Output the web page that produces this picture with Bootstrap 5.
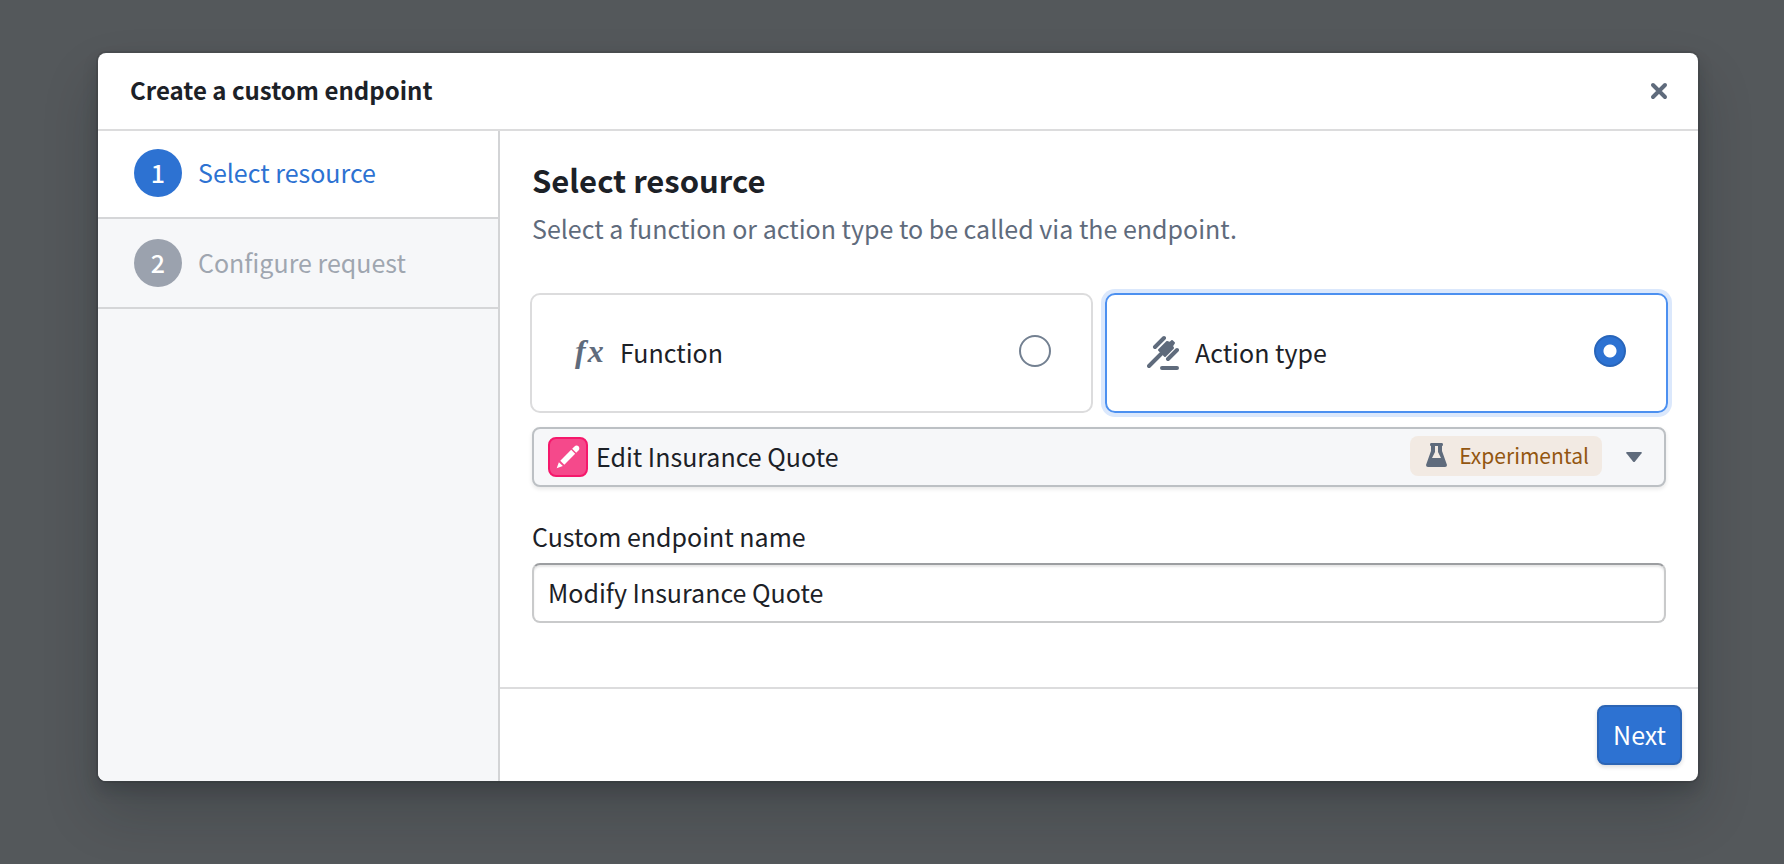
<!DOCTYPE html>
<html lang="en">
<head>
<meta charset="utf-8">
<meta name="viewport" content="width=device-width, initial-scale=1">
<title>Create a custom endpoint</title>
<link href="https://cdn.jsdelivr.net/npm/bootstrap@5.3.0/dist/css/bootstrap.min.css" rel="stylesheet">
<style>
  :root { --ink: #1c2127; --muted: #5f6b7c; --blue: #2d72d2; --line: #dcdcdd; }
  body {
    background: #54585b; color: var(--ink);
    font-family: "Noto Sans CJK SC", "Noto Sans", sans-serif;
    font-size: 25px; line-height: 36px;
  }
  .page-wrap { padding: 53px 86px 82px 98px; }
  .dialog {
    border-radius: 8px; overflow: hidden;
    box-shadow: 0 0 0 2px rgba(17,20,24,.1), 0 8px 16px rgba(17,20,24,.2), 0 30px 56px rgba(17,20,24,.2);
  }
  .dialog-head { padding: 20px 29px 20px 32px; border-bottom: 2px solid var(--line); }
  .dialog-title { font-size: 24px; line-height: 34px; font-weight: 600; }
  .close-btn { width: 20px; height: 20px; color: var(--muted); }
  .steps { flex: 0 0 402px; background: #f6f7f9; border-right: 2px solid #d3d4d6; }
  .step { padding: 20px 36px; gap: 16px; border-bottom: 2px solid #d5d6d8; color: #9fa6b0; text-decoration: none; }
  .step:first-child { padding-top: 18px; }
  .step.current { background: #fff; color: var(--blue); }
  .step-num { width: 48px; height: 48px; background: #9ba2ae; color: #fff; font-weight: 500; }
  .current .step-num { background: var(--blue); }
  .dialog-title, .step-num, .step-text, .choice-text { padding-bottom: 2px; }
  .pane-body { padding: 29px 30px 64px; }
  .pane-title { font-size: 31px; line-height: 40px; font-weight: 600; }
  .inset { margin-left: 2px; margin-right: 2px; }
  .subtitle { color: var(--muted); margin-top: 10px; }
  .choices { gap: 12px; margin-top: 47px; }
  .choice { flex: 1 1 0; height: 120px; padding: 0 40px; border: 2px solid var(--line); border-radius: 10px; cursor: pointer; }
  .choice.picked { border-color: #4c90f0; box-shadow: 0 0 0 4px #dbe8fc; }
  .choice-icon { width: 32px; height: 36px; margin-right: 16px; color: var(--muted); }
  .fx { gap: 2px; padding-left: 3px; font: italic bold 32px/32px "Liberation Serif", serif; }
  .choice input {
    appearance: none; width: 32px; height: 32px; margin: 0 0 4px; border: 2px solid #738091; border-radius: 50%; background: #fff;
  }
  .choice input:checked { border-color: #2865ba; background: radial-gradient(circle, #fff 6px, var(--blue) 7px); }
  .picker { margin-top: 14px; }
  .picker > * { grid-area: 1 / 1; }
  .picker select {
    appearance: none; height: 60px; padding: 0 260px 2px 62px; color: var(--ink);
    border: 2px solid #bcc0c4; border-radius: 8px; background: #f6f7f9; box-shadow: 0 2px 4px rgba(17,20,24,.1);
  }
  .picker-extras { padding: 0 24px 0 16px; pointer-events: none; z-index: 1; }
  .tile { width: 40px; height: 40px; border: 2px solid #f5186b; border-radius: 8px; background: #f5498b; }
  .tag { height: 40px; padding: 0 13px 2px 15px; gap: 10px; border-radius: 8px; background: #f2eae3; color: #935610; font-size: 21px; margin: 0 24px 2px 0; }
  .name-label { margin-top: 31px; margin-bottom: 9px; }
  .name-box {
    height: 60px; padding: 0 14px 2px; color: var(--ink); border: 2px solid #c9cacb; border-top-color: #9c9ea1; border-radius: 8px;
    box-shadow: inset 0 2px 2px rgba(17,20,24,.1);
  }
  .dialog-foot { padding: 16px; border-top: 2px solid var(--line); }
  .next-btn {
    height: 60px; padding: 0 14px 2px; border: 2px solid #2c65b5; border-radius: 8px; background: var(--blue); color: #fff;
    box-shadow: 0 2px 4px rgba(17,20,24,.15);
  }
  @media (max-width: 1100px) {
    .page-wrap { padding: 24px; }
    .dialog-main, .choices { flex-direction: column; }
    .steps, .choice { flex: none; border-right-width: 2px; }
  }
</style>
</head>
<body>
<div class="page-wrap">
  <section class="dialog bg-white" role="dialog" aria-labelledby="dialog-title">
    <header class="dialog-head d-flex align-items-center justify-content-between">
      <h1 class="dialog-title m-0" id="dialog-title">Create a custom endpoint</h1>
      <button type="button" class="close-btn btn border-0 p-0 d-flex" aria-label="Close">
        <svg width="20" height="20" viewBox="0 0 20 20" fill="none" stroke="currentColor" stroke-width="4" stroke-linecap="round"><path d="M4 4l12 12M16 4L4 16"/></svg>
      </button>
    </header>
    <div class="dialog-main d-flex">
      <nav class="steps" aria-label="Steps">
        <a href="#" class="step current d-flex align-items-center" aria-current="step"><span class="step-num rounded-circle d-flex align-items-center justify-content-center">1</span><span class="step-text">Select resource</span></a>
        <a href="#" class="step d-flex align-items-center"><span class="step-num rounded-circle d-flex align-items-center justify-content-center">2</span><span class="step-text">Configure request</span></a>
      </nav>
      <form class="flex-fill d-flex flex-column">
        <div class="pane-body">
          <h2 class="pane-title inset mb-0">Select resource</h2>
          <p class="subtitle inset mb-0">Select a function or action type to be called via the endpoint.</p>
          <div class="choices d-flex">
            <label class="choice d-flex align-items-center" for="kind-function">
              <span class="choice-icon fx d-flex" aria-hidden="true"><span>f</span><span>x</span></span>
              <span class="choice-text flex-fill">Function</span>
              <input type="radio" name="kind" id="kind-function">
            </label>
            <label class="choice picked d-flex align-items-center" for="kind-action">
              <svg class="choice-icon" viewBox="0 0 32 36" fill="none" stroke="currentColor" stroke-width="4" stroke-linecap="round"><path d="M2 31l12-12M8 12l9-9M21 24l9-9M15 33h15"/><path d="M12 15l8-8 3 1 2-2 2 2-2 3 1 2-8 8z" fill="currentColor" stroke-width="2" stroke-linejoin="round"/></svg>
              <span class="choice-text flex-fill">Action type</span>
              <input type="radio" name="kind" id="kind-action" checked>
            </label>
          </div>
          <div class="picker inset d-grid">
            <select class="w-100" aria-label="Action type"><option>Edit Insurance Quote</option></select>
            <div class="picker-extras d-flex align-items-center">
              <span class="tile d-flex align-items-center justify-content-center me-auto">
                <svg width="26" height="26" viewBox="0 0 16 16" fill="#fff"><path d="M3.25 10.26l2.47 2.47 6.69-6.69-2.46-2.48-6.7 6.7zM.99 14.99l3.86-1.39-2.46-2.44L.99 15zm12.25-14c-.48 0-.92.2-1.24.51l-1.44 1.44 2.47 2.47 1.44-1.44c.32-.32.51-.75.51-1.24.01-.95-.77-1.74-1.74-1.74z"/></svg>
              </span>
              <span class="tag d-flex align-items-center">
                <svg width="24" height="26" viewBox="0 0 24 26" fill="#5f6b7c" fill-rule="evenodd"><path d="M6 1h11q1 0 1 1.500T17 4v5l5 14q0 2-2 2H3q-2 0-2-2L6 9V4Q5 4 5 2.500T6 1zM10 4v6l-3 6h9l-3-6V4z"/></svg>
                Experimental
              </span>
              <svg width="16" height="10" viewBox="0 0 16 10" fill="#5f6b7c"><path d="M1 0h14q1.500 0 .6 1.200L9 9.500q-1 1-2 0L.4 1.200Q-.5 0 1 0z"/></svg>
            </div>
          </div>
          <label class="name-label inset d-block" for="endpoint-name">Custom endpoint name</label>
          <div class="inset"><input class="name-box w-100 d-block" type="text" id="endpoint-name" value="Modify Insurance Quote"></div>
        </div>
        <footer class="dialog-foot d-flex justify-content-end mt-auto">
          <button type="button" class="next-btn">Next</button>
        </footer>
      </form>
    </div>
  </section>
</div>
<script src="https://cdn.jsdelivr.net/npm/bootstrap@5.3.0/dist/js/bootstrap.bundle.min.js"></script>
</body>
</html>
